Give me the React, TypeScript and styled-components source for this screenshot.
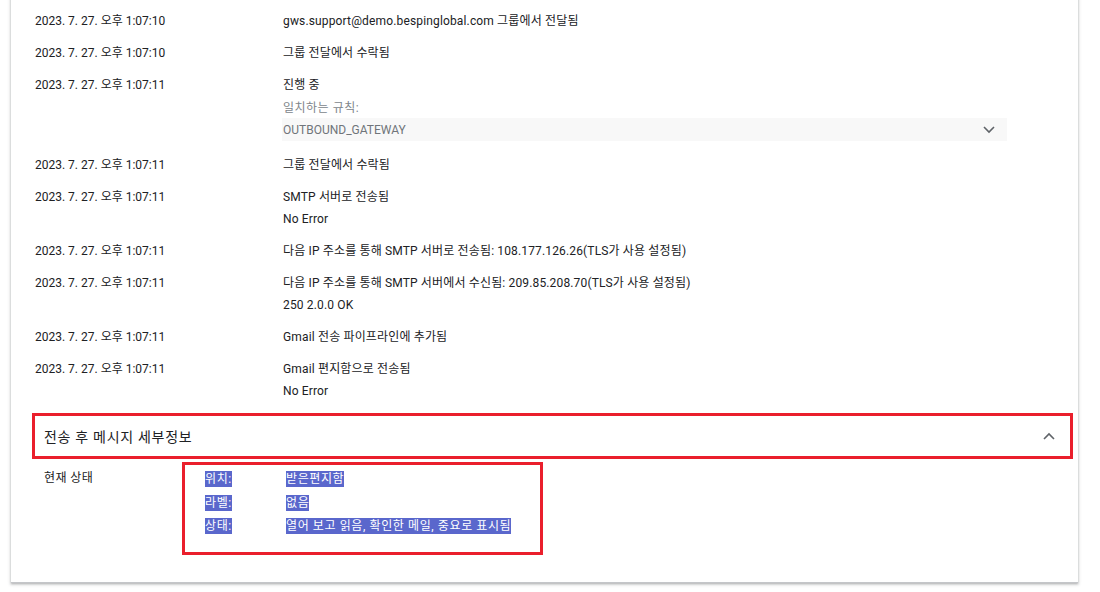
import styled, { createGlobalStyle } from 'styled-components';

interface IEvent {
  time: string;
  message: string;
  detail?: string;
  rule?: { label: string; value: string };
}

const events: IEvent[] = [
  { time: '2023. 7. 27. 오후 1:07:10', message: 'gws.support@demo.bespinglobal.com 그룹에서 전달됨' },
  { time: '2023. 7. 27. 오후 1:07:10', message: '그룹 전달에서 수락됨' },
  {
    time: '2023. 7. 27. 오후 1:07:11',
    message: '진행 중',
    rule: { label: '일치하는 규칙:', value: 'OUTBOUND_GATEWAY' },
  },
  { time: '2023. 7. 27. 오후 1:07:11', message: '그룹 전달에서 수락됨' },
  { time: '2023. 7. 27. 오후 1:07:11', message: 'SMTP 서버로 전송됨', detail: 'No Error' },
  {
    time: '2023. 7. 27. 오후 1:07:11',
    message: '다음 IP 주소를 통해 SMTP 서버로 전송됨: 108.177.126.26(TLS가 사용 설정됨)',
  },
  {
    time: '2023. 7. 27. 오후 1:07:11',
    message: '다음 IP 주소를 통해 SMTP 서버에서 수신됨: 209.85.208.70(TLS가 사용 설정됨)',
    detail: '250 2.0.0 OK',
  },
  { time: '2023. 7. 27. 오후 1:07:11', message: 'Gmail 전송 파이프라인에 추가됨' },
  { time: '2023. 7. 27. 오후 1:07:11', message: 'Gmail 편지함으로 전송됨', detail: 'No Error' },
];

const status = [
  { label: '위치:', value: '받은편지함' },
  { label: '라벨:', value: '없음' },
  { label: '상태:', value: '열어 보고 읽음, 확인한 메일, 중요로 표시됨' },
];

const Chevron = ({ up }: { up?: boolean }) => (
  <svg width="12" height="8" viewBox="0 0 12 8">
    <path
      d={up ? 'M1 7 L6 2 L11 7' : 'M1 1 L6 6 L11 1'}
      fill="none"
      stroke="#5f6368"
      strokeWidth="1.6"
    />
  </svg>
);

export default function App() {
  return (
    <>
      <GlobalStyle />
      <Page>
        <Card>
          <EventList>
            {events.map((ev, i) => (
              <EventRow key={i}>
                <Time>{ev.time}</Time>
                <Message>
                  <Line>{ev.message}</Line>
                  {ev.detail && <SubLine>{ev.detail}</SubLine>}
                  {ev.rule && (
                    <>
                      <RuleLabel>{ev.rule.label}</RuleLabel>
                      <RuleBox>
                        <span>{ev.rule.value}</span>
                        <Chevron />
                      </RuleBox>
                    </>
                  )}
                </Message>
              </EventRow>
            ))}
          </EventList>

          <SectionHeader>
            <SectionTitle>전송 후 메시지 세부정보</SectionTitle>
            <Chevron up />
          </SectionHeader>

          <StatusSection>
            <StatusTitle>현재 상태</StatusTitle>
            <StatusBox>
              {status.map((s) => (
                <StatusRow key={s.label}>
                  <Selected>{s.label}</Selected>
                  <Selected>{s.value}</Selected>
                </StatusRow>
              ))}
            </StatusBox>
          </StatusSection>
        </Card>
      </Page>
    </>
  );
}

const GlobalStyle = createGlobalStyle`
  html, body {
    margin: 0;
    padding: 0;
    background: #ffffff;
  }
  body {
    font-family: Roboto, "Noto Sans CJK KR", sans-serif;
    color: #202124;
  }
`;

const Page = styled.div`
  height: 592px;
  overflow: hidden;
  padding: 0 22px 0 11px;
`;

const Card = styled.div`
  margin-top: -10px;
  padding: 15px 0 27px;
  background: #fff;
  border-bottom: 1px solid #c4c6c9;
  box-shadow: 0 1px 2px rgba(60, 64, 67, 0.3), 0 1px 3px 1px rgba(60, 64, 67, 0.15);
`;

const EventList = styled.div`
  display: flex;
  flex-direction: column;
`;

const EventRow = styled.div`
  display: grid;
  grid-template-columns: 248px 724px;
  padding: 8px 0 8px 24px;
  font-size: 12px;
  line-height: 16px;
`;

const Time = styled.div`
  color: #202124;
`;

const Message = styled.div`
  display: flex;
  flex-direction: column;
  letter-spacing: 0.15px;
`;

const Line = styled.div`
  color: #202124;
`;

const SubLine = styled.div`
  margin-top: 6px;
  color: #202124;
`;

const RuleLabel = styled.div`
  margin-top: 7px;
  color: #80868b;
  letter-spacing: 0.5px;
`;

const RuleBox = styled.div`
  display: flex;
  align-items: center;
  justify-content: space-between;
  margin: 2px 0 0 -1px;
  height: 23px;
  padding: 0 12px 0 1px;
  background: #f8f8f8;
  color: #70757a;
  letter-spacing: 0;
`;

const SectionHeader = styled.div`
  display: flex;
  align-items: center;
  justify-content: space-between;
  margin: 6px 5px 0 21px;
  height: 40px;
  padding: 0 15px 0 9px;
  border: 3px solid #ea1f2c;
`;

const SectionTitle = styled.div`
  font-size: 14px;
  letter-spacing: 0.7px;
  color: #202124;
`;

const StatusSection = styled.div`
  display: grid;
  grid-template-columns: 138px 361px;
  padding-left: 33px;
  margin-top: 3px;
  font-size: 12px;
  line-height: 16px;
`;

const StatusTitle = styled.div`
  padding-top: 8px;
  letter-spacing: 0.4px;
  color: #202124;
`;

const StatusBox = styled.div`
  display: flex;
  flex-direction: column;
  gap: 7.5px;
  padding: 6px 0 18px 20px;
  border: 3px solid #ea1f2c;
`;

const StatusRow = styled.div`
  display: grid;
  grid-template-columns: 81px auto;
  align-items: start;
`;

const Selected = styled.span`
  justify-self: start;
  display: inline-block;
  line-height: 16px;
  letter-spacing: 0.6px;
  background: #5a67cc;
  color: #ffffff;
`;
